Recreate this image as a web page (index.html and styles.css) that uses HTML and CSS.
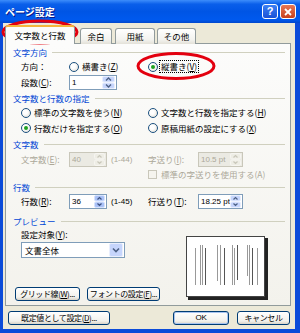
FILE: index.html
```html
<!DOCTYPE html>
<html>
<head>
    <meta charset="utf-8">
    <title>ページ設定</title>
    <link rel="stylesheet" href="styles.css">
</head>
<body>
<div class="window">
    <div class="titlebar">
        <span class="title">ページ設定</span>
        <span class="cap-btn help">?</span>
        <span class="cap-btn close">
            <svg width="10" height="10" viewBox="0 0 10 10"><path d="M2 2L8 8M8 2L2 8" stroke="#fff" stroke-width="1.8"/></svg>
        </span>
    </div>

    <div class="client">
        <div class="tabs">
            <div class="tab active">文字数と行数</div>
            <div class="tab t-margin">余白</div>
            <div class="tab t-paper">用紙</div>
            <div class="tab t-other">その他</div>
        </div>

        <div class="panel">
            <div class="hdr h-first">文字方向</div>
            <div class="row r-dir">
                <div class="cell">
                    <span class="lbl">方向：</span>
                    <span class="radio"></span><span>横書き(<u>Z</u>)</span>
                </div>
                <div class="cell">
                    <span class="radio on"></span><span class="focus">縦書き(<u>V</u>)</span>
                </div>
            </div>
            <div class="row r-cols">
                <div class="cell">
                    <span class="lbl">段数(<u>C</u>):</span>
                    <div class="field w-cols"><span>1</span>
                        <svg class="spin" width="13" height="13" viewBox="0 0 13 13"><rect x="0.5" y="0.5" width="12" height="5.5" rx="1.5" fill="#C6D5FC" stroke="#E8EEFD"/><rect x="0.5" y="7" width="12" height="5.5" rx="1.5" fill="#C6D5FC" stroke="#E8EEFD"/><path d="M4 4.5L6.5 2L9 4.5" fill="none" stroke="#4D6185" stroke-width="1.3"/><path d="M4 8.5L6.5 11L9 8.5" fill="none" stroke="#4D6185" stroke-width="1.3"/></svg>
                    </div>
                </div>
            </div>

            <div class="hdr h-spec">文字数と行数の指定</div>
            <div class="row r-opt1">
                <div class="cell"><span class="radio"></span><span>標準の文字数を使う(<u>N</u>)</span></div>
                <div class="cell"><span class="radio"></span><span>文字数と行数を指定する(<u>H</u>)</span></div>
            </div>
            <div class="row r-opt2">
                <div class="cell"><span class="radio on"></span><span>行数だけを指定する(<u>O</u>)</span></div>
                <div class="cell"><span class="radio"></span><span>原稿用紙の設定にする(<u>X</u>)</span></div>
            </div>

            <div class="hdr h-chars">文字数</div>
            <div class="row r-chars off">
                <div class="cell">
                    <span class="lbl">文字数(<u>E</u>):</span>
                    <div class="field w-num dis"><span>40</span>
                        <svg class="spin" width="11" height="13" viewBox="0 0 11 13"><rect x="0.5" y="0.5" width="10" height="5.5" rx="1.5" fill="#EEEDE5" stroke="#F6F5F0"/><rect x="0.5" y="7" width="10" height="5.5" rx="1.5" fill="#EEEDE5" stroke="#F6F5F0"/><path d="M3.5 4.5L5.5 2.5L7.5 4.5" fill="none" stroke="#C9C7BA" stroke-width="1.2"/><path d="M3.5 8.5L5.5 10.5L7.5 8.5" fill="none" stroke="#C9C7BA" stroke-width="1.2"/></svg>
                    </div>
                    <span class="range">(1-44)</span>
                </div>
                <div class="cell">
                    <span class="lbl2">字送り(<u>I</u>):</span>
                    <div class="field w-pt dis"><span>10.5 pt</span>
                        <svg class="spin" width="11" height="13" viewBox="0 0 11 13"><rect x="0.5" y="0.5" width="10" height="5.5" rx="1.5" fill="#EEEDE5" stroke="#F6F5F0"/><rect x="0.5" y="7" width="10" height="5.5" rx="1.5" fill="#EEEDE5" stroke="#F6F5F0"/><path d="M3.5 4.5L5.5 2.5L7.5 4.5" fill="none" stroke="#C9C7BA" stroke-width="1.2"/><path d="M3.5 8.5L5.5 10.5L7.5 8.5" fill="none" stroke="#C9C7BA" stroke-width="1.2"/></svg>
                    </div>
                </div>
            </div>
            <div class="row r-check off">
                <div class="cell"></div>
                <div class="cell"><span class="check"></span><span>標準の字送りを使用する(A)</span></div>
            </div>

            <div class="hdr h-lines">行数</div>
            <div class="row r-lines">
                <div class="cell">
                    <span class="lbl">行数(<u>R</u>):</span>
                    <div class="field w-num"><span>36</span>
                        <svg class="spin" width="11" height="13" viewBox="0 0 11 13"><rect x="0.5" y="0.5" width="10" height="5.5" rx="1.5" fill="#A9C1F7" stroke="#D6E2FC"/><rect x="0.5" y="7" width="10" height="5.5" rx="1.5" fill="#A9C1F7" stroke="#D6E2FC"/><path d="M3.5 4.5L5.5 2.5L7.5 4.5" fill="none" stroke="#3D5180" stroke-width="1.2"/><path d="M3.5 8.5L5.5 10.5L7.5 8.5" fill="none" stroke="#3D5180" stroke-width="1.2"/></svg>
                    </div>
                    <span class="range">(1-45)</span>
                </div>
                <div class="cell">
                    <span class="lbl2">行送り(<u>T</u>):</span>
                    <div class="field w-pt"><span>18.25 pt</span>
                        <svg class="spin" width="11" height="13" viewBox="0 0 11 13"><rect x="0.5" y="0.5" width="10" height="5.5" rx="1.5" fill="#C6D5FC" stroke="#E8EEFD"/><rect x="0.5" y="7" width="10" height="5.5" rx="1.5" fill="#C6D5FC" stroke="#E8EEFD"/><path d="M3.5 4.5L5.5 2.5L7.5 4.5" fill="none" stroke="#4D6185" stroke-width="1.2"/><path d="M3.5 8.5L5.5 10.5L7.5 8.5" fill="none" stroke="#4D6185" stroke-width="1.2"/></svg>
                    </div>
                </div>
            </div>

            <div class="hdr h-prev">プレビュー</div>
            <div class="preview">
                <div class="prev-left">
                    <div class="target-lbl">設定対象(<u>Y</u>):</div>
                    <div class="select"><span>文書全体</span>
                        <svg width="14" height="14" viewBox="0 0 14 14"><rect x="0.5" y="0.5" width="13" height="13" rx="1.5" fill="#C6D5FC" stroke="#E8EEFD"/><path d="M4 5.5L7 8.5L10 5.5" fill="none" stroke="#4D6185" stroke-width="1.6"/></svg>
                    </div>
                    <div class="prev-btns">
                        <div class="btn b-grid">グリッド線(<u>W</u>)...</div>
                        <div class="btn b-font">フォントの設定(<u>F</u>)...</div>
                    </div>
                </div>
                <svg class="paper" width="82" height="64" viewBox="0 0 82 64">
                    <rect x="2" y="2" width="80" height="62" fill="#222"/>
                    <rect x="0.5" y="0.5" width="78" height="60" fill="#fff" stroke="#444"/>
                    <g stroke="#999" stroke-width="1">
                        <path d="M9.5 12V49"/>
                        <path d="M14.5 9V49M16.5 9V49"/>
                        <path d="M31.5 9V45M34.5 9V49"/>
                        <path d="M46.5 9V49M48.5 12V49"/>
                        <path d="M61.5 9V40M63.5 9V49"/>
                        <path d="M71.5 12V49"/>
                    </g>
                    <g stroke="#555" stroke-width="1">
                        <path d="M19.5 12V49"/>
                        <path d="M38.5 12V49"/>
                        <path d="M51.5 9V44"/>
                        <path d="M66.5 12V49"/>
                    </g>
                </svg>
            </div>
        </div>

        <div class="footer">
            <div class="btn b-default">既定値として設定(<u>D</u>)...</div>
            <span class="spacer"></span>
            <div class="btn b-ok">OK</div>
            <div class="btn b-cancel">キャンセル</div>
        </div>
    </div>

    <svg class="marks" width="300" height="333" viewBox="0 0 300 333">
        <ellipse cx="40" cy="32" rx="37" ry="11" fill="none" stroke="#E3000F" stroke-width="3"/>
        <ellipse cx="176" cy="66" rx="38" ry="12.5" fill="none" stroke="#E3000F" stroke-width="3"/>
    </svg>
</div>
</body>
</html>
```

FILE: styles.css
```css
* {
    box-sizing: border-box;
}
body {
    margin: 0;
    font-family: "Noto Sans CJK JP", "Noto Sans", sans-serif;
    font-size: 8.5px;
    line-height: 1;
    color: #000;
    white-space: nowrap;
}
u {
    text-decoration: underline;
}
.window {
    position: relative;
    width: 300px;
    height: 333px;
    background: #0B4BD9;
    display: flex;
    flex-direction: column;
}
.titlebar {
    height: 23px;
    display: flex;
    align-items: center;
    padding: 0 4px 0 5px;
    background: linear-gradient(#3D8DFB 0%, #0A5FEA 18%, #0055E5 50%, #0059EE 85%, #0047CC 100%);
}
.title {
    flex: 1;
    color: #fff;
    font-weight: bold;
    font-size: 10px;
    text-shadow: 1px 1px #0A1883;
}
.cap-btn {
    width: 16px;
    height: 15px;
    border: 1px solid #fff;
    border-radius: 3px;
    display: flex;
    align-items: center;
    justify-content: center;
    color: #fff;
    font-weight: bold;
    font-size: 11px;
    font-family: "Liberation Sans", sans-serif;
}
.help {
    background: linear-gradient(#3C80F4, #1A52D6);
    margin-right: 2px;
}
.close {
    background: linear-gradient(#E87855, #C7401C);
}
.client {
    flex: 1;
    background: #ECE9D8;
    margin: 0 5px 4px 3px;
    padding: 2px 4px 0 2px;
}

/* tabs */
.tabs {
    display: flex;
    align-items: flex-end;
    height: 19px;
    position: relative;
    z-index: 1;
}
.tab {
    height: 16px;
    border: 1px solid #919B9C;
    border-bottom: none;
    border-radius: 3px 3px 0 0;
    background: linear-gradient(#FFFFFF, #F3F3EF 70%, #E3E1D8);
    display: flex;
    align-items: center;
    justify-content: center;
}
.tab.active {
    width: 70px;
    height: 19px;
    border-top: 2px solid #F5B53C;
    background: #FCFCFB;
}
.t-margin {
    width: 32px;
    margin-left: 5px;
}
.t-paper {
    width: 40px;
    margin-left: 3px;
}
.t-other {
    width: 39px;
    margin-left: 2px;
}

.panel {
    margin-top: -1px;
    height: 263px;
    border: 1px solid #919B9C;
    background: linear-gradient(#FCFCFB, #F3F2EC);
    padding: 1px 5px 0 7px;
}
.hdr {
    display: flex;
    align-items: center;
    gap: 5px;
    color: #0046D5;
    height: 14px;
}
.hdr::after {
    content: "";
    flex: 1;
    border-top: 1px solid #D0D0BF;
}
.h-chars {
    height: 16px;
}
.h-lines {
    height: 13px;
}
.h-prev {
    height: 13px;
    margin-top: 6px;
}

.row {
    display: grid;
    grid-template-columns: 135px 1fr;
    align-items: center;
    height: 15px;
}
.r-cols {
    height: 17px;
}
.r-opt2 {
    height: 16px;
}
.r-check {
    height: 14px;
}
.cell {
    display: flex;
    align-items: center;
}
.row .cell:first-child {
    padding-left: 8px;
}
.lbl {
    width: 48px;
}
.lbl2 {
    width: 50px;
}
.off {
    color: #ACA899;
}
.radio {
    width: 10px;
    height: 10px;
    border-radius: 50%;
    border: 1px solid #1C5180;
    background: radial-gradient(circle at 40% 40%, #fff 30%, #DCD9CE);
    margin-right: 3px;
    display: flex;
    align-items: center;
    justify-content: center;
}
.radio.on::after {
    content: "";
    width: 4px;
    height: 4px;
    border-radius: 50%;
    background: #21A121;
}
.focus {
    outline: 1px dotted #000;
    outline-offset: 1px;
}
.check {
    width: 9px;
    height: 9px;
    border: 1px solid #C9C7BA;
    background: #F5F4EE;
    margin-right: 4px;
}

.field {
    display: flex;
    align-items: center;
    height: 15px;
    border: 1px solid #7F9DB9;
    background: #fff;
    padding: 0 1px 0 2px;
    font-family: "Liberation Sans", sans-serif;
    font-size: 8px;
}
.field span {
    flex: 1;
    overflow: hidden;
}
.field.dis {
    border-color: #C9C7BA;
    background: #EBEAE3;
    color: #ACA899;
}
.w-cols {
    width: 48px;
}
.w-num {
    width: 38px;
}
.w-pt {
    width: 45px;
}
.range {
    margin-left: 4px;
    font-family: "Liberation Sans", sans-serif;
    font-size: 8px;
}

/* preview */
.preview {
    display: flex;
}
.prev-left {
    width: 173px;
}
.target-lbl {
    height: 12px;
    padding-left: 8px;
    display: flex;
    align-items: center;
}
.select {
    margin: 2px 0 0 8px;
    width: 104px;
    height: 16px;
    border: 1px solid #7F9DB9;
    background: #fff;
    display: flex;
    align-items: center;
    padding: 0 1px 0 3px;
}
.select span {
    flex: 1;
}
.prev-btns {
    display: flex;
    gap: 7px;
    margin: 29px 0 0 2px;
}
.paper {
    margin-top: 8px;
}

.btn {
    height: 14px;
    border: 1px solid #003C74;
    border-radius: 3px;
    background: linear-gradient(#FFFFFF, #F2F1EC 75%, #D8D3C8);
    display: flex;
    align-items: center;
    justify-content: center;
    font-size: 8px;
    letter-spacing: -0.4px;
    overflow: hidden;
}
.b-grid {
    width: 65px;
}
.b-font {
    width: 73px;
}

.footer {
    display: flex;
    margin-top: 5px;
    padding-left: 3px;
}
.spacer {
    flex: 1;
}
.b-default {
    width: 102px;
}
.b-ok {
    width: 56px;
    font-family: "Liberation Sans", sans-serif;
    box-shadow: inset 0 0 0 1px #A8C4F0;
}
.b-cancel {
    width: 53px;
    margin: 0 1px 0 8px;
}

.marks {
    position: absolute;
    top: 0;
    left: 0;
    pointer-events: none;
}
```
